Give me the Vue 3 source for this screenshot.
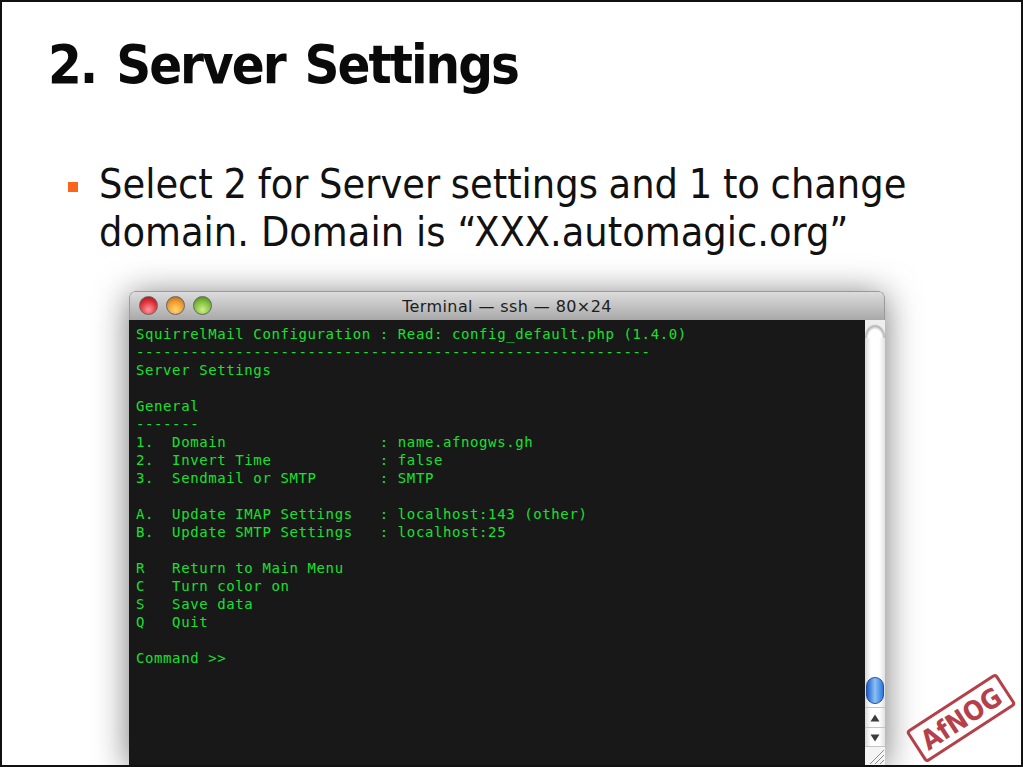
<script setup>
const lines = [
  'SquirrelMail Configuration : Read: config_default.php (1.4.0)',
  '---------------------------------------------------------',
  'Server Settings',
  '',
  'General',
  '-------',
  '1.  Domain                 : name.afnogws.gh',
  '2.  Invert Time            : false',
  '3.  Sendmail or SMTP       : SMTP',
  '',
  'A.  Update IMAP Settings   : localhost:143 (other)',
  'B.  Update SMTP Settings   : localhost:25',
  '',
  'R   Return to Main Menu',
  'C   Turn color on',
  'S   Save data',
  'Q   Quit',
  '',
  'Command >>'
]
</script>

<template>
  <div class="slide">
    <h1 class="title">2. Server Settings</h1>
    <div class="bullet">
      <span class="mark"></span>
      <p class="text">Select 2 for Server settings and 1 to change <span class="second">domain. Domain is “XXX.automagic.org”</span></p>
    </div>
    <div class="window">
      <div class="titlebar">
        <div class="lights">
          <span class="light red"></span>
          <span class="light amber"></span>
          <span class="light green"></span>
        </div>
        <span class="wintitle">Terminal — ssh — 80×24</span>
      </div>
      <div class="body">
        <pre class="term"><div v-for="(l, i) in lines" :key="i" class="line">{{ l }}</div></pre>
        <div class="scroll">
          <div class="cap"></div>
          <div class="track"></div>
          <div class="thumb"></div>
          <div class="arrows">
            <div class="arrow">
              <svg width="10" height="8" viewBox="0 0 10 8"><path d="M5 0.5 L9.5 7.5 H0.5 Z" fill="#3c3c3c"/></svg>
            </div>
            <div class="arrow">
              <svg width="10" height="8" viewBox="0 0 10 8"><path d="M5 7.5 L9.5 0.5 H0.5 Z" fill="#3c3c3c"/></svg>
            </div>
          </div>
          <div class="grip">
            <svg width="20" height="18" viewBox="0 0 20 18">
              <path d="M5 17 L19 3 M10 17 L19 8 M15 17 L19 13" stroke="#8d8d8d" stroke-width="1" fill="none"/>
            </svg>
          </div>
        </div>
      </div>
    </div>
    <div class="stamp"><span class="stamp-text">AfNOG</span></div>
  </div>
</template>

<style>
html, body { margin: 0; background: #fff; }
</style>

<style scoped>
.slide {
  position: relative;
  box-sizing: border-box;
  width: 1023px;
  height: 767px;
  overflow: hidden;
  background: #fff;
  border: 2px solid #111;
  padding: 0 0 0 48px;
  color: #0a0a0a;
}
.title {
  margin: 0 0 0 -2px;
  padding-top: 25px;
  font-family: "DejaVu Sans", sans-serif;
  font-stretch: condensed;
  font-size: 54px;
  line-height: 75px;
  font-weight: 700;
  letter-spacing: -2px;
  word-spacing: 5px;
}
.bullet {
  display: flex;
  margin-top: 58px;
}
.mark {
  flex: none;
  width: 10px;
  height: 10px;
  margin: 22px 21px 0 18px;
  background: #f9651a;
}
.text {
  margin: 0;
  width: 830px;
  font-family: "DejaVu Sans", sans-serif;
  font-stretch: condensed;
  font-size: 41px;
  line-height: 48px;
  word-spacing: -1px;
  color: #111;
}
.second { word-spacing: 0.3px; }
.window {
  width: 756px;
  margin: 35px 0 0 79px;
  height: 474px;
  border-radius: 6px 6px 0 0;
  box-shadow: 0 4px 34px rgba(0, 0, 0, 0.55);
  overflow: hidden;
}
.titlebar {
  position: relative;
  height: 29px;
  display: flex;
  align-items: center;
  justify-content: center;
  background: linear-gradient(#dcdcdc, #a9a9a9);
  border: 1px solid #9a9a9a;
  border-bottom: none;
  border-radius: 6px 6px 0 0;
  box-sizing: border-box;
}
.lights {
  position: absolute;
  left: 9px;
  top: 4px;
  display: flex;
  gap: 8px;
}
.light {
  width: 19px;
  height: 19px;
  border-radius: 50%;
  box-sizing: border-box;
  border: 1px solid #666;
}
.red { background: radial-gradient(circle at 50% 75%, #ff9a9a, #e0313a 55%, #8c1018); }
.amber { background: radial-gradient(circle at 50% 75%, #ffd66e, #ef9a2e 55%, #a8581a); }
.green { background: radial-gradient(circle at 50% 75%, #cdf08a, #7fbd3d 55%, #47761f); }
.wintitle {
  font-family: "DejaVu Sans", sans-serif;
  font-size: 16px;
  letter-spacing: 0.4px;
  color: #1d1d1d;
}
.body {
  display: flex;
  height: 445px;
  background: #181818;
}
.term {
  flex: 1;
  margin: 0;
  padding: 5px 0 0 7px;
  font-family: "DejaVu Sans Mono", monospace;
  font-size: 14px;
  letter-spacing: 0.6px;
  line-height: 18px;
  color: #18e030;
}
.line { height: 18px; white-space: pre; }
.scroll {
  position: relative;
  width: 20px;
  display: flex;
  flex-direction: column;
  background: linear-gradient(90deg, #d8d8d8, #fff 30%, #fff 70%, #e2e2e2);
}
.cap {
  height: 18px;
  background: radial-gradient(ellipse 11px 14px at 50% 100%, #fff 60%, #b5b5b5 85%, #eeeeee 100%);
}
.track { flex: 1; }
.thumb {
  position: absolute;
  top: 357px;
  left: 1px;
  width: 18px;
  height: 27px;
  border-radius: 9px;
  background: linear-gradient(90deg, #1a5fd0, #8cc0f4 50%, #2a78e0);
  border: 1px solid #274f94;
  box-sizing: border-box;
}
.arrows { height: 39px; }
.arrow {
  height: 19px;
  display: flex;
  align-items: center;
  justify-content: center;
  border-top: 1px solid #c4c4c4;
}
.grip { height: 18px; border-top: 1px solid #c4c4c4; background: #f4f4f4; }
.grip svg { display: block; }
.stamp {
  position: absolute;
  left: 905px;
  top: 697px;
  width: 108px;
  height: 38px;
  box-sizing: border-box;
  border: 3px solid #b5404a;
  border-radius: 4px;
  transform: rotate(-33deg);
  display: flex;
  align-items: center;
  justify-content: center;
}
.stamp-text {
  font-family: "DejaVu Sans", sans-serif;
  font-stretch: condensed;
  font-weight: 700;
  font-size: 27px;
  color: #b5404a;
}
</style>
